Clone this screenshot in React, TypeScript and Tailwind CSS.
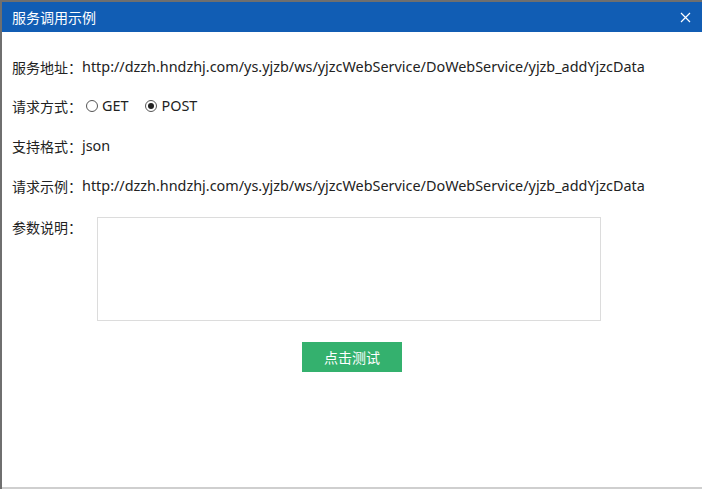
const URL = "http://dzzh.hndzhj.com/ys.yjzb/ws/yjzcWebService/DoWebService/yjzb_addYjzcData";

function Radio({ checked, label }: { checked?: boolean; label: string }) {
  return (
    <label className="flex items-center">
      <span className="flex h-[12px] w-[12px] items-center justify-center rounded-full border border-[#555] bg-white">
        {checked && <span className="h-[6px] w-[6px] rounded-full bg-[#222]" />}
      </span>
      <span className="ml-[4px] text-[14.4px]">{label}</span>
    </label>
  );
}

export default function App() {
  return (
    <div
      className="h-[489px] w-[702px] overflow-hidden bg-[#6f6f6f] pl-[2px] pt-[2px] text-[14px] text-[#222]"
      style={{ fontFamily: '"Segoe UI", "Noto Sans", "Noto Sans CJK SC", sans-serif' }}
    >
      <div className="flex h-[485px] flex-col bg-white">
        <div className="flex h-[30px] items-center justify-between bg-[#115db4] pl-[10px] pr-[10px] text-white">
          <span>服务调用示例</span>
          <svg width="11" height="11" viewBox="0 0 11 11" className="mr-[1px]">
            <path d="M1 1L10 10M10 1L1 10" stroke="white" strokeWidth="1.2" />
          </svg>
        </div>

        <div className="flex flex-col px-[10px] pt-[25px]">
          <div className="flex h-[20px] items-center">
            <span>服务地址：</span>
            <span className="text-[14.4px]">{URL}</span>
          </div>
          <div className="mt-[19px] flex h-[20px] items-center">
            <span>请求方式：</span>
            <div className="flex items-center gap-[17px] pl-[4px]">
              <Radio label="GET" />
              <Radio checked label="POST" />
            </div>
          </div>
          <div className="mt-[20px] flex h-[20px] items-center">
            <span>支持格式：</span>
            <span className="text-[14.4px]">json</span>
          </div>
          <div className="mt-[20px] flex h-[20px] items-center">
            <span>请求示例：</span>
            <span className="text-[14.4px]">{URL}</span>
          </div>
          <div className="mt-[21px] flex">
            <span className="w-[85px]">参数说明：</span>
            <div className="h-[104px] w-[504px] border border-[#dcdcdc]" />
          </div>
          <div className="mt-[21px] flex justify-center">
            <button className="h-[30px] w-[100px] bg-[#34b16e] text-white">点击测试</button>
          </div>
        </div>
      </div>
      <div className="h-[2px] bg-[#cfcfcf]" />
    </div>
  );
}
